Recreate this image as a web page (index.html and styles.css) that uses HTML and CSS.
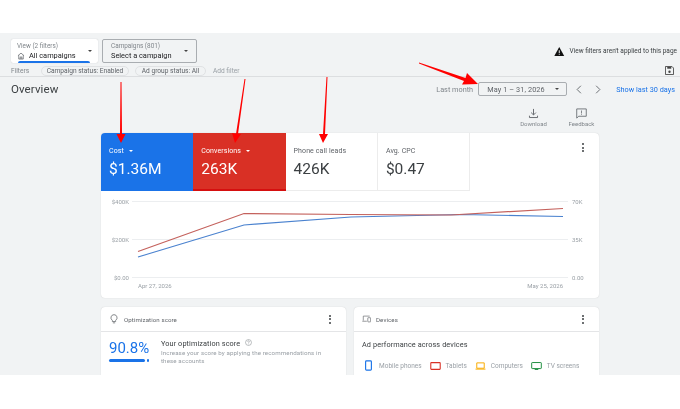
FILE: index.html
```html
<!DOCTYPE html>
<html lang="en">
<head>
<meta charset="utf-8">
<title>Overview</title>
<link rel="stylesheet" href="styles.css">
</head>
<body>
<div class="stage">
  <main class="screen">
    <section class="toolbar">
      <div class="picker picker-active">
        <div class="picker-text">
          <span class="picker-label">View (2 filters)</span>
          <span class="picker-value"><svg class="home" viewBox="0 0 10 10"><path d="M1.2 4.6 5 1.4l3.8 3.2M2.2 4v4.8h5.6V4M4 8.8V6.2h2v2.6" fill="none" stroke="#5f6368" stroke-width=".9"/></svg>All campaigns</span>
        </div>
        <i class="caret"></i>
      </div>
      <div class="picker picker-outline">
        <div class="picker-text">
          <span class="picker-label">Campaigns (801)</span>
          <span class="picker-value">Select a campaign</span>
        </div>
        <i class="caret"></i>
      </div>
      <div class="notice">
        <svg class="warn" viewBox="0 0 11 10"><path d="M5.5 0 11 10H0z" fill="#111"/><path d="M5 3.5h1v3.3H5zM5 7.6h1v1H5z" fill="#fff"/></svg>
        <span>View filters aren't applied to this page</span>
      </div>
    </section>

    <section class="filters">
      <span class="filters-label">Filters</span>
      <span class="chip">Campaign status: Enabled</span>
      <span class="chip chip-short">Ad group status: All</span>
      <span class="add-filter">Add filter</span>
      <svg class="save" viewBox="0 0 10 10"><path d="M.5.5h7.2L9.5 2.3v7.2H.5z" fill="none" stroke="#444" stroke-width="1"/><path d="M2.5 1h4.5v2H2.5z" fill="#444"/><circle cx="5" cy="6.4" r="1.3" fill="#444"/></svg>
    </section>

    <section class="heading">
      <h1>Overview</h1>
      <div class="range">
        <span class="range-label">Last month</span>
        <div class="range-box"><span>May 1 – 31, 2026</span><i class="caret caret-small"></i></div>
        <svg class="chev chev-left" viewBox="0 0 8 12"><path d="M6.5 1 1.5 6l5 5" fill="none" stroke="#5f6368" stroke-width="1.2"/></svg>
        <svg class="chev chev-right" viewBox="0 0 8 12"><path d="M1.5 1l5 5-5 5" fill="none" stroke="#5f6368" stroke-width="1.2"/></svg>
        <span class="range-link">Show last 30 days</span>
      </div>
    </section>

    <section class="actions">
      <div class="action">
        <svg class="action-icon" viewBox="0 0 12 12"><path d="M6 1v6.4M3.4 5 6 7.6 8.6 5M1.6 8.4v2h8.8v-2" fill="none" stroke="#5f6368" stroke-width="1"/></svg>
        <span>Download</span>
      </div>
      <div class="action">
        <svg class="action-icon" viewBox="0 0 12 12"><path d="M.8 1h10.4v8H3L.8 11z" fill="none" stroke="#5f6368" stroke-width=".9"/><path d="M5.6 2.6h.8v3.2h-.8zM5.6 6.4h.8v.9h-.8z" fill="#5f6368"/></svg>
        <span>Feedback</span>
      </div>
    </section>

    <section class="card performance">
      <div class="tiles">
        <div class="tile tile-blue">
          <span class="tile-label">Cost<i class="caret caret-white"></i></span>
          <span class="tile-value">$1.36M</span>
        </div>
        <div class="tile tile-red">
          <span class="tile-label">Conversions<i class="caret caret-white"></i></span>
          <span class="tile-value">263K</span>
        </div>
        <div class="tile tile-plain">
          <span class="tile-label">Phone call leads</span>
          <span class="tile-value">426K</span>
        </div>
        <div class="tile tile-plain">
          <span class="tile-label">Avg. CPC</span>
          <span class="tile-value">$0.47</span>
        </div>
        <div class="kebab kebab-tiles"><b></b><b></b><b></b></div>
      </div>
      <svg class="chart" viewBox="0 0 498 107">
        <g class="grid">
          <path d="M31 10.500H467M31 48.500H467M31 86.500H467"/>
        </g>
        <g class="axis">
          <text x="28" y="13" text-anchor="end">$400K</text>
          <text x="28" y="51" text-anchor="end">$200K</text>
          <text x="28" y="89" text-anchor="end">$0.00</text>
          <text x="471" y="13">70K</text>
          <text x="471" y="51">35K</text>
          <text x="471" y="89">0.00</text>
          <text x="37" y="97">Apr 27, 2026</text>
          <text x="462" y="97" text-anchor="end">May 25, 2026</text>
        </g>
        <polyline class="line-blue" points="37,66 143,34 250,26 360,23.500 462,25.500"/>
        <polyline class="line-red" points="37,60.500 143,22.500 250,23.500 350,24 462,17.500"/>
      </svg>
    </section>

    <section class="lower">
      <article class="card panel">
        <header class="panel-head">
          <svg class="panel-icon" viewBox="0 0 12 12"><path d="M6 .8a3.700 3.700 0 0 0-2 6.800v1.400h4V7.600A3.700 3.700 0 0 0 6 .8zM4.600 10.600h2.800" fill="none" stroke="#5f6368" stroke-width=".9"/></svg>
          <span>Optimization score</span>
          <div class="kebab"><b></b><b></b><b></b></div>
        </header>
        <div class="score">
          <div class="score-figure">
            <span class="score-value">90.8%</span>
            <div class="score-bar"><i></i><i></i></div>
          </div>
          <div class="score-copy">
            <h2>Your optimization score<svg class="help" viewBox="0 0 8 8"><circle cx="4" cy="4" r="3.400" fill="none" stroke="#80868b" stroke-width=".6"/><path d="M3 3.100a1 1 0 1 1 1.500.9c-.4.2-.5.4-.5.8M4 5.500v.6" fill="none" stroke="#80868b" stroke-width=".6"/></svg></h2>
            <p>Increase your score by applying the recommendations in these accounts</p>
          </div>
        </div>
      </article>
      <article class="card panel">
        <header class="panel-head">
          <svg class="panel-icon panel-icon-wide" viewBox="0 0 14 12"><path d="M2 8.500V1.500h10M.5 9.500h7" fill="none" stroke="#5f6368" stroke-width="1"/><rect x="9" y="4" width="4.400" height="6.500" rx=".6" fill="none" stroke="#5f6368" stroke-width="1"/></svg>
          <span>Devices</span>
          <div class="kebab"><b></b><b></b><b></b></div>
        </header>
        <div class="devices">
          <h2>Ad performance across devices</h2>
          <ul class="legend">
            <li class="legend-phone"><svg viewBox="0 0 8 12"><rect x=".7" y=".7" width="6.600" height="10.600" rx="1" fill="none" stroke="#1a73e8" stroke-width="1.300"/></svg>Mobile phones</li>
            <li class="legend-tablet"><svg viewBox="0 0 12 9"><rect x=".7" y=".7" width="10.600" height="7.600" rx=".6" fill="none" stroke="#d93025" stroke-width="1.200"/></svg>Tablets</li>
            <li class="legend-computer"><svg viewBox="0 0 12 9"><path d="M1.800 1h8.400v6H1.800zM.4 8h11.200" fill="none" stroke="#f9ab00" stroke-width="1.100"/></svg>Computers</li>
            <li class="legend-tv"><svg viewBox="0 0 12 9"><rect x=".6" y=".6" width="10.800" height="6.800" rx=".6" fill="none" stroke="#1e8e3e" stroke-width="1.100"/><path d="M4 8.500h4" stroke="#1e8e3e" stroke-width="1.100"/></svg>TV screens</li>
          </ul>
        </div>
      </article>
    </section>
  </main>

  <svg class="arrows" viewBox="0 0 680 409">
    <path d="M120.500 82H121.500L122 134H125.500L121 143 116.500 134H120z"/>
    <path d="M244.500 79H245.500L238 134H241L235 143 232 133 236 134z"/>
    <path d="M326.500 77H327.500L325 134H328L323 143 319 134H323z"/>
    <path d="M419 62.600 419 63.600 464 81 462 84.500 478 84 467 73 465.500 78z"/>
  </svg>
</div>
</body>
</html>
```
FILE: styles.css
```css
* { box-sizing: border-box; }

html, body {
  margin: 0;
  padding: 0;
  background: #fff;
}

body {
  font-family: Roboto, "Liberation Sans", sans-serif;
  color: #3c4043;
}

.stage {
  position: relative;
  width: 680px;
  height: 409px;
  padding-top: 33px;
  overflow: hidden;
  filter: blur(0.4px);
}

.screen {
  height: 342px;
  background: #f1f3f4;
  overflow: hidden;
}

/* toolbar */
.toolbar {
  display: flex;
  align-items: flex-start;
  gap: 4px;
  padding: 6px 3px 0 11px;
  height: 31px;
}

.picker {
  display: flex;
  align-items: center;
  justify-content: space-between;
  height: 24px;
  border-radius: 2px;
  padding: 0 6px;
}

.picker-active {
  position: relative;
  width: 87px;
  background: #fff;
  box-shadow: 0 0 1px rgba(60, 64, 67, .3);
}

.picker-active::after {
  content: "";
  position: absolute;
  left: 7px;
  right: 8px;
  bottom: 0;
  height: 2px;
  border-radius: 2px 2px 0 0;
  background: #1a73e8;
}

.picker-outline {
  width: 95px;
  border: 1px solid #a9adb1;
  padding: 0 8px;
}

.picker-text {
  display: flex;
  flex-direction: column;
  gap: 1px;
}

.picker-label {
  font-size: 6.400px;
  line-height: 8px;
  color: #80868b;
}

.picker-value {
  display: flex;
  align-items: center;
  gap: 4px;
  font-size: 7.400px;
  line-height: 10px;
  color: #202124;
}

.home {
  width: 8px;
  height: 8px;
}

.caret {
  display: inline-block;
  width: 0;
  height: 0;
  border: 2.500px solid transparent;
  border-top-color: #444;
  border-bottom: 0;
}

.caret-small {
  border-width: 2.200px;
  border-bottom: 0;
}

.caret-white {
  border-top-color: #fff;
  margin-left: 5px;
  vertical-align: 1px;
}

.notice {
  display: flex;
  align-items: center;
  gap: 5px;
  margin-left: auto;
  padding-top: 7px;
  font-size: 6.500px;
  line-height: 10px;
  color: #3c4043;
}

.warn {
  width: 10.500px;
  height: 9px;
}

/* filters */
.filters {
  display: flex;
  align-items: center;
  height: 13px;
  padding: 1px 6px 0 11px;
  border-bottom: 1px solid #dcdee0;
  font-size: 6.600px;
  color: #80868b;
}

.filters-label {
  width: 30px;
}

.chip {
  width: 88px;
  height: 10px;
  margin-right: 6px;
  border: 1px solid #e0e2e4;
  border-radius: 6px;
  text-align: center;
  line-height: 8px;
  color: #5f6368;
}

.chip-short {
  width: 71px;
}

.add-filter {
  margin-left: 1px;
  color: #9aa0a6;
}

.save {
  width: 9px;
  height: 9px;
  margin-left: auto;
}

/* heading */
.heading {
  display: flex;
  align-items: flex-start;
  justify-content: space-between;
  height: 29px;
  padding: 5px 5px 0 11px;
}

h1 {
  margin: 0;
  font-size: 11.500px;
  line-height: 14px;
  font-weight: 400;
  color: #3c4043;
  letter-spacing: .1px;
}

.range {
  display: flex;
  align-items: center;
  height: 14px;
  font-size: 7.300px;
}

.range-label {
  width: 42px;
  color: #80868b;
}

.range-box {
  display: flex;
  align-items: center;
  justify-content: space-between;
  width: 89px;
  height: 14px;
  padding: 0 7px 0 8px;
  border: 1px solid #a9adb1;
  border-radius: 2px;
  color: #5f6368;
  letter-spacing: .1px;
}

.chev {
  width: 6px;
  height: 9px;
}

.chev-left {
  margin-left: 9px;
}

.chev-right {
  margin-left: 13px;
}

.range-link {
  margin-left: 15px;
  color: #1a73e8;
}

/* actions */
.actions {
  display: flex;
  justify-content: flex-end;
  gap: 21px;
  height: 27px;
  padding: 2px 85px 0 0;
}

.action {
  display: flex;
  flex-direction: column;
  align-items: center;
  width: 27px;
  gap: 1px;
  font-size: 6px;
  line-height: 8px;
  color: #80868b;
}

.action-icon {
  width: 11px;
  height: 11px;
}

/* cards */
.card {
  background: #fff;
  border-radius: 4px;
  box-shadow: 0 0 1px rgba(60, 64, 67, .25);
}

.performance {
  width: 498px;
  height: 165px;
  margin-left: 101px;
  overflow: hidden;
}

.tiles {
  display: flex;
  position: relative;
  height: 58px;
}

.tile {
  display: flex;
  flex-direction: column;
  width: 92.300px;
  padding: 14px 8px 0;
}

.tile-blue {
  background: #1a73e8;
  color: #fff;
  border-bottom: 2px solid #1a73e8;
}

.tile-red {
  background: #d93025;
  color: #fff;
  border-bottom: 2px solid #d50f0f;
}

.tile-plain {
  border-right: 1px solid #ececec;
  border-bottom: 1px solid #ececec;
}

.tile-label {
  font-size: 7px;
  line-height: 9px;
  letter-spacing: .1px;
}

.tile-plain .tile-label {
  color: #5f6368;
}

.tile-value {
  margin-top: 3px;
  font-size: 15.500px;
  line-height: 20px;
}

.tile-plain .tile-value {
  color: #3c4043;
}

.kebab {
  display: flex;
  flex-direction: column;
  gap: 1.500px;
  width: 2px;
  margin-left: auto;
}

.kebab b {
  width: 2px;
  height: 2px;
  border-radius: 50%;
  background: #3c4043;
}

.kebab-tiles {
  position: absolute;
  top: 10px;
  right: 15px;
}

.chart {
  display: block;
  width: 498px;
  height: 107px;
}

.grid path {
  fill: none;
  stroke: #eceef0;
  stroke-width: 1;
}

.axis text {
  font-family: Roboto, "Liberation Sans", sans-serif;
  font-size: 6px;
  fill: #9aa0a6;
}

.line-blue,
.line-red {
  fill: none;
  stroke-width: 1.200;
}

.line-blue {
  stroke: #4a82cf;
}

.line-red {
  stroke: #c4615c;
}

/* lower cards */
.lower {
  display: flex;
  gap: 8px;
  width: 498px;
  margin: 9px 0 0 101px;
}

.panel {
  width: 245px;
  height: 100px;
}

.panel-head {
  display: flex;
  align-items: center;
  gap: 5px;
  height: 25px;
  padding: 0 15px 0 8px;
  border-bottom: 1px solid #e4e5e7;
  font-size: 6.100px;
  color: #5f6368;
  letter-spacing: .1px;
}

.panel-icon {
  width: 10px;
  height: 10px;
}

.panel-icon-wide {
  width: 9px;
}

.score {
  display: flex;
  padding: 7px 10px 0 8px;
}

.score-figure {
  width: 52px;
  flex: none;
}

.score-value {
  display: block;
  font-size: 15px;
  line-height: 19px;
  color: #1a73e8;
}

.score-bar {
  display: flex;
  gap: 1px;
  margin-top: 1px;
  width: 40px;
}

.score-bar i {
  display: block;
  height: 3px;
  border-radius: 2px;
  background: #1a73e8;
}

.score-bar i:first-child {
  width: 36px;
}

.score-bar i:last-child {
  width: 2px;
  margin-left: 1px;
}

.score-copy h2,
.devices h2 {
  margin: 0;
  font-size: 7.300px;
  line-height: 9px;
  font-weight: 400;
  color: #3c4043;
  letter-spacing: .1px;
}

.help {
  width: 7px;
  height: 7px;
  margin-left: 5px;
  vertical-align: 0;
}

.score-copy p {
  margin: 1px 0 0;
  width: 165px;
  font-size: 6.200px;
  line-height: 8px;
  color: #9aa0a6;
  letter-spacing: .1px;
}

.devices {
  padding: 8px 8px 0;
}

.legend {
  display: flex;
  gap: 8px;
  margin: 11px 0 0;
  padding: 0 0 0 3px;
  list-style: none;
  font-size: 6.500px;
  line-height: 10px;
  color: #9aa0a6;
}

.legend li {
  display: flex;
  align-items: center;
  gap: 5px;
}

.legend-phone svg {
  width: 7px;
  height: 11px;
  margin-right: 2px;
}

.legend-tablet svg,
.legend-computer svg,
.legend-tv svg {
  width: 11px;
  height: 8px;
}

/* annotation arrows */
.arrows {
  position: absolute;
  inset: 0;
  width: 680px;
  height: 409px;
  fill: #f00;
  pointer-events: none;
}
```
